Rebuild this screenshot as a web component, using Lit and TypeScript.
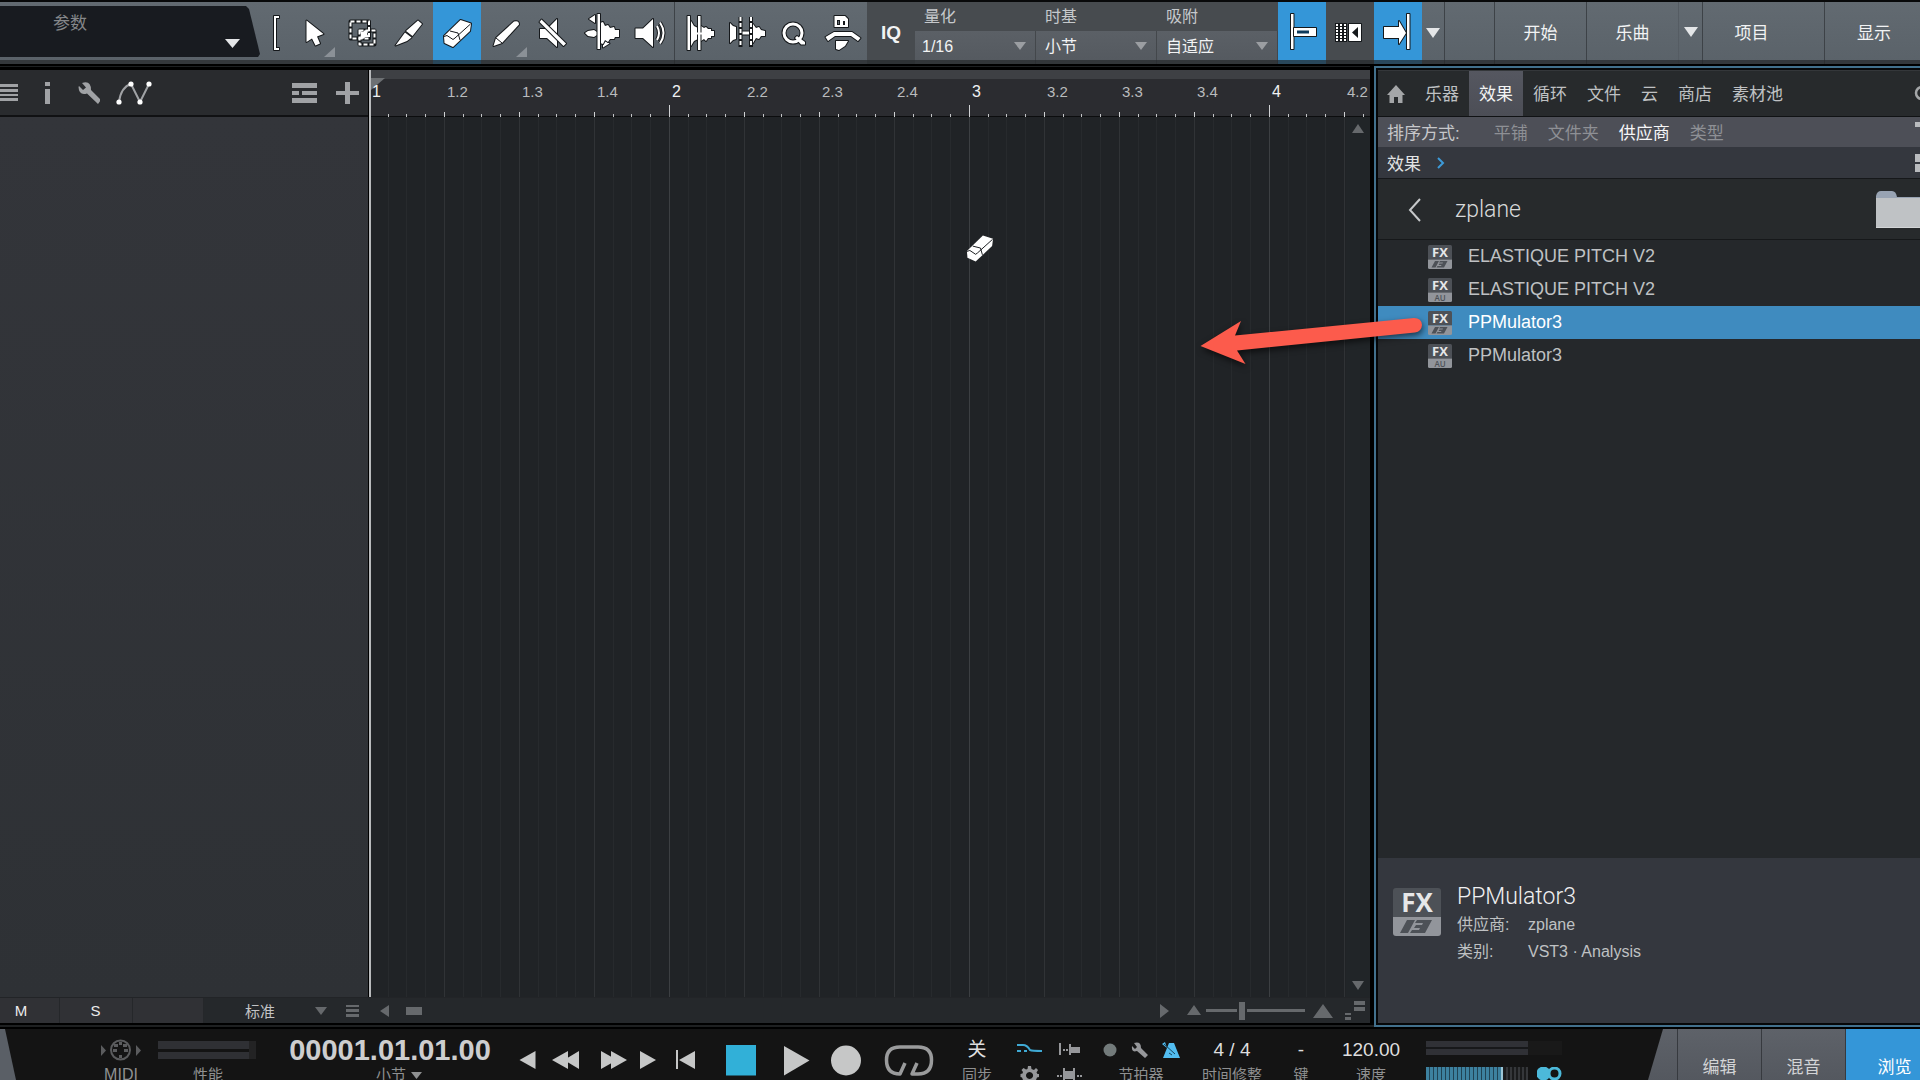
import { LitElement, html, svg, css } from "lit";
import { customElement, property, state } from "lit/decorators.js";
import { classMap } from "lit/directives/class-map.js";

const glyph = (x: number, y: number, w: number, h: number, body: unknown) =>
  html`<svg width=${w} height=${h} viewBox="${x} ${y} ${w} ${h}" aria-hidden="true">${body}</svg>`;

const shared = css`
  *, *::before, *::after { box-sizing: border-box; }
  svg { display: block; flex: none; }
  button, select, a {
    font: inherit; color: inherit; background: none; border: 0; padding: 0; margin: 0;
    border-radius: 0; text-decoration: none; cursor: pointer;
  }
  button, a { display: flex; align-items: center; justify-content: center; white-space: nowrap; }
`;

const eraser = svg`
  <path d="M444 36 460.500 20 471 23.500 470 31 453 47 444.500 43Z"/>
  <path class="line" d="M444 36.500 447 35.500 453 39.500 455 38 470.500 24M450 31 458 33 460 40"/>`;

const editTools = [
  { name: "箭头工具", x: 288, corner: 335, art: svg`<path d="M306.500 20.500V42L312 38.500 315.500 45.500 320 43.500 317 36.500 323.500 34Z"/>` },
  { name: "范围工具", x: 337, art: svg`
      <path class="under" d="M351.500 21.500H370V38.500H351.500Z"/><path class="under" d="M360.500 30.500H375.500V44.500H360.500Z"/>
      <path class="dash" d="M351.500 21.500H370V38.500H351.500Z"/><path class="dash" d="M360.500 30.500H375.500V44.500H360.500Z"/>
      <path class="core" d="M361 31 364 32 366 30 369 31.500 368 34 370 37 366.500 37 364 39 361 38 362 34.500Z"/>` },
  { name: "分割工具", x: 385, art: svg`<path d="M395.500 45.500 405 32.500 411.500 37.500 407 41Z"/><path d="M406 31 418 20.500 422 24 412.500 36Z"/>` },
  { name: "橡皮擦工具", x: 433, art: eraser },
  { name: "绘图工具", x: 481, corner: 527, art: svg`<path d="M493.500 46 496 38 514 21.500Q519 20 519 24.500L502 43Z"/><path class="line" d="M496 38 502 43"/>` },
  { name: "静音工具", x: 529, art: svg`<path d="M540 29H547L557 19V47L547 38H540Z"/><path d="M541.500 19.500 566 43.500 563.500 46 539.500 22Z"/>` },
  { name: "弯曲工具", x: 577, art: svg`
      <path d="M584 33 587 31 593 30 596 32V35L593 37 587 36Z"/><path d="M588 19 594 15V23Z"/><path d="M602 40V47.500L608.500 43.500Z"/>
      <path d="M599 23 602 22 604 26 607 25 609 28 613 27 614 30 618 30V37L614 37 613 39 609 39 607 42 604 40 602 44 599 43Z"/>
      <path d="M596.500 14H599V49H596.500Z"/>` },
  { name: "监听工具", x: 626, art: svg`
      <path d="M635.500 28.500H643L653 19V47L643 38H635.500Z"/>
      <path class="under" d="M657 26Q661 33 657 40M660 22.500Q667 33 660 43.500"/>
      <path class="arc" d="M657 26Q661 33 657 40M660 22.500Q667 33 660 43.500"/>` },
];

const macroTools = [
  { name: "剥离静音", x: 674, art: svg`
      <path d="M690 21 693 26 697 28V39L693 41 690 46Z"/>
      <path d="M700 26 703 28 705 27 707 29 710 29 710 31 713 31V36L710 36 710 38 707 38 705 41 703 39 700 41Z"/>
      <path d="M686.500 16H689V50H686.500Z"/><path d="M697 16H699.500V50H697Z"/><path class="core" d="M690 32.500H708V34.500H690Z"/>` },
  { name: "音频弯曲", x: 723, art: svg`
      <path d="M730 23 733 26 736 27V39L733 40 730 43Z"/>
      <path d="M753 24 756 28 759 27 761 30 765 31V36L761 36 759 39 756 38 753 43Z"/>
      <path d="M740 31.500H752V34.500H740Z"/>
      <path class="under" d="M740.500 17V47M751 17V47"/><path class="dash" d="M740.500 17V47M751 17V47"/>` },
  { name: "量化", x: 771, art: svg`<circle class="ring-under" cx="793" cy="33" r="9"/><path d="M795 38 797 36 805 42V44.500H801Z"/><circle class="arc bold" cx="793" cy="33" r="9"/>` },
  { name: "恢复计时", x: 820, art: svg`
      <path fill-rule="evenodd" d="M835.500 16H846L849 19V27H835.500ZM838 20V25H841V20ZM844 21V25H846V21Z"/>
      <path d="M826.500 37 835 32H853L861.500 38 859 41 852 36H836L829 41Z"/><path d="M837 41H849L846 46 840 50 837 49Z"/>` },
];

@customElement("daw-toolbar")
export class DawToolbar extends LitElement {
  @state() private active = "橡皮擦工具";

  static styles = [shared, css`
    :host { display: flex; box-sizing: border-box; height: 64px; border-top: 2px solid #08090a; position: relative; color: #f2f3f4;
      background: linear-gradient(#626a71, #5a6269); }
    :host::after { content: ""; position: absolute; inset: 58px 0 0; background: #26282b; opacity: .72; pointer-events: none; }
    svg path { fill: #fff; stroke: #15181b; stroke-width: 2px; paint-order: stroke; stroke-linejoin: round; }
    svg .core { stroke: none; }
    svg .line { fill: none; stroke-width: 1px; }
    svg .dash { fill: none; stroke: #fff; stroke-width: 2px; stroke-dasharray: 4 2; stroke-linejoin: miter; }
    svg .arc { fill: none; stroke: #fff; stroke-width: 2px; }
    svg .bold { stroke-width: 3px; }
    svg .under { fill: none; stroke: #15181b; stroke-width: 4px; }
    svg .ring-under { fill: none; stroke: #15181b; stroke-width: 5px; }
    svg .flat { fill: #8b9197; stroke: none; }
    svg .pale { fill: #e4e6e8; stroke: none; }
    .param { width: 260px; height: 51px; margin-top: 4px; display: flex; justify-content: space-between;
      background: #181b20; clip-path: polygon(0 0, 246px 0, 249px 3px, 260px 48px, 258px 100%, 0 100%); color: #85878a; font-size: 17px; }
    .param span { padding: 7px 0 0 53px; line-height: 22px; }
    .param svg { margin: 33px 19px 0 0; }
    .bracket { width: 28px; height: 58px; }
    .tools { display: grid; height: 62px; }
    .edit { width: 386px; grid-template-columns: repeat(8, 1fr); }
    .macro { width: 193px; grid-template-columns: repeat(4, 1fr); border-left: 1px solid #3d4247; }
    .tools button { align-items: flex-start; overflow: hidden; }
    .on { background: #3496d8; }
    .fields { display: flex; background: #474b4f; height: 62px; }
    .iq { width: 48px; height: 62px; font-size: 19px; font-weight: bold; }
    .field { width: 121px; display: flex; flex-direction: column; }
    .field label { height: 29px; padding-left: 9px; line-height: 30px; font-size: 16px; color: #c6c9cc; }
    .box { height: 33px; position: relative; background: linear-gradient(#5b6066, #54595f); border-right: 1px solid #43474b; }
    .box select { width: 100%; height: 31px; padding-left: 7px; appearance: none; font-size: 16px; outline: 0; }
    .field + .field select { padding-left: 9px; }
    .box svg { position: absolute; right: 9px; top: 11px; pointer-events: none; }
    .box path { fill: #9b9ea2; stroke: none; }
    .square { width: 48px; align-items: flex-start; }
    .square:nth-child(2) { background: #474b4f; }
    .snap { display: flex; height: 62px; }
    .snap .small { width: 23px; padding-bottom: 1px; border-right: 1px solid #3d4247; }
    .pages { flex: 1; min-width: 0; display: flex; height: 62px; font-size: 17px; overflow: hidden; }
    .pages > * { border-right: 1px solid #3d4247; flex: none; padding-bottom: 3px; }
    .blank { width: 50px; } .start { width: 92px; } .song { width: 92px; } .song-menu { width: 24px; }
    .pages .song { border-right-color: #555c63; }
    .project { width: 122px; padding-right: 24px; } .show { width: 98px; }
    .pages .show { border: 0; }
  `];

  private tool = (t: { name: string; x: number; corner?: number; art: unknown }) => html`
    <button class=${classMap({ on: t.name === this.active })} aria-label=${t.name} @click=${() => (this.active = t.name)}>
      ${glyph(t.x, 2, 48, 58, svg`${t.art}${t.corner ? svg`<path class="flat" d="M${t.corner} 47V57H${t.corner - 11}Z"/>` : ""}`)}
    </button>`;

  private field = (id: string, label: string, options: string[]) => html`
    <div class="field">
      <label for=${id}>${label}</label>
      <div class="box">
        <select id=${id}>${options.map((o) => html`<option>${o}</option>`)}</select>
        ${glyph(0, 0, 12, 8, svg`<path d="M0 0H12L6 8Z"/>`)}
      </div>
    </div>`;

  render() {
    return html`
      <div class="param"><span>参数</span>${glyph(0, 0, 16, 10, svg`<path class="pale" d="M0 0H15L7.500 9Z"/>`)}</div>
      <div class="bracket">${glyph(260, 2, 28, 58, svg`<path d="M274 16H279V18H276V48H279V50H274Z"/>`)}</div>
      <div class="tools edit">${editTools.map(this.tool)}</div>
      <div class="tools macro">${macroTools.map(this.tool)}</div>
      <div class="fields">
        <button class="iq">IQ</button>
        ${this.field("quantize", "量化", ["1/16"])}${this.field("timebase", "时基", ["小节"])}${this.field("snap", "吸附", ["自适应"])}
      </div>
      <div class="snap">
        <button class="square on" aria-label="吸附到网格">${glyph(1278, 2, 48, 58, svg`
          <path d="M1291 14H1293.500V49H1291Z"/><path d="M1294 28H1316V36H1294Z"/>
          <path style="fill:#0d3a5c;stroke:none" d="M1297 30.500H1309V33.500H1297Z"/>`)}</button>
        <button class="square" aria-label="自动滚动">${glyph(1326, 2, 48, 58, svg`
          <path style="fill:#15181b;stroke:none" d="M1335 23H1347V42H1335Z"/>
          <path style="stroke:#fff;stroke-width:2;stroke-dasharray:2 1;fill:none" d="M1337 24V41M1341 24V41M1345 24V41"/>
          <path d="M1349 24H1361V41H1349Z"/><path style="fill:#15181b;stroke:none" d="M1358 27V38L1352 32.500Z"/>`)}</button>
        <button class="square on" aria-label="跟随光标">${glyph(1374, 2, 48, 58, svg`
          <path d="M1384 27H1399V21L1406 33 1399 44V38H1384Z"/><path d="M1407 14H1409.500V49H1407Z"/>`)}</button>
        <button class="small" aria-label="滚动选项">${glyph(0, 0, 16, 10, svg`<path class="pale" d="M1 0H15L8 10Z"/>`)}</button>
      </div>
      <nav class="pages">
        <span class="blank"></span>
        <button class="start">开始</button>
        <button class="song">乐曲</button>
        <button class="song-menu" aria-label="乐曲菜单">${glyph(0, 0, 14, 10, svg`<path class="pale" d="M0 0H14L7 10Z"/>`)}</button>
        <button class="project">项目</button>
        <button class="show">显示</button>
      </nav>`;
  }
}

const beats = Array.from({ length: 14 }, (_, i) => {
  const bar = Math.floor(i / 4) + 1;
  const beat = (i % 4) + 1;
  return { major: beat === 1, text: beat === 1 ? `${bar}` : `${bar}.${beat}` };
});

@customElement("daw-arranger")
export class DawArranger extends LitElement {
  static styles = [shared, css`
    :host { display: grid; grid-template: 47px minmax(0, 1fr) 26px / 368px minmax(0, 1fr); min-width: 0; min-height: 0;
      padding-top: 6px; margin-bottom: 6px; background: linear-gradient(#000 2px, #1d2022 2px, #1d2022 3px, #000 3px); }
    .track-head { display: flex; align-items: center; background: #292b2e; border-bottom: 2px solid #101113; padding-right: 8px; gap: 16px; }
    .track-head .gap { flex: 1; }
    .track-head path { fill: #a0a2a5; }
    .track-head .wire { fill: none; stroke: #a0a2a5; stroke-width: 2px; }
    .track-head circle { fill: #fff; }
    .tracks { background: linear-gradient(#33353a, #2e3135); }
    .ruler { position: relative; border-left: 2px solid #b8babc; margin-left: 1px; overflow: hidden; display: flex;
      background: linear-gradient(#3e4044 9px, #2b2c30 9px); box-shadow: inset 0 -1px #0c0d0e; }
    .beat { flex: none; width: 75px; padding: 13px 0 0 1px; font-size: 15px; line-height: 18px; color: #b9bbbd;
      background:
        linear-gradient(#c4c6c8, #c4c6c8) 17px 100% / 1px 3px no-repeat,
        linear-gradient(#c4c6c8, #c4c6c8) 35px 100% / 1px 3px no-repeat,
        linear-gradient(#c4c6c8, #c4c6c8) 54px 100% / 1px 3px no-repeat,
        linear-gradient(#d0d2d4, #d0d2d4) 73px 100% / 1px 5px no-repeat; }
    .major { color: #f0f1f2; font-size: 16px; }
    .ruler .premajor { background:
        linear-gradient(#c4c6c8, #c4c6c8) 17px 100% / 1px 3px no-repeat,
        linear-gradient(#c4c6c8, #c4c6c8) 35px 100% / 1px 3px no-repeat,
        linear-gradient(#c4c6c8, #c4c6c8) 54px 100% / 1px 3px no-repeat,
        linear-gradient(#d0d2d4, #d0d2d4) 73px 100% / 1px 12px no-repeat; }
    .flag { position: absolute; left: 0; top: 8px; }
    .flag path { fill: #6d7073; }
    .beat span { position: relative; }
    .lane { display: flex; border-left: 2px solid #b8babc; margin-left: 1px; background: #23272a; min-height: 0; }
    .grid { flex: 1; background:
        repeating-linear-gradient(90deg, transparent 0 298px, #3c3f42 298px 299px, transparent 299px 300px),
        repeating-linear-gradient(90deg, transparent 0 73px, #303336 73px 74px, transparent 74px 75px),
        repeating-linear-gradient(90deg, transparent 0 17px, #272a2d 17px 18px, transparent 18px 35px, #272a2d 35px 36px, transparent 36px 54px, #272a2d 54px 55px, transparent 55px 75px),
        #202326; }
    .vscroll { width: 24px; display: flex; flex-direction: column; justify-content: space-between; align-items: center; padding: 7px 0; background: #212528; }
    .vscroll path, .foot path { fill: #66696c; }
    .foot { grid-column: 1 / -1; display: flex; align-items: center; background: #25282b; border-top: 1px solid #222427; color: #ececec; font-size: 15px; }
    .foot .key { height: 100%; background: #303135; border-right: 1px solid #25272a; }
    .m { width: 60px; padding-right: 17px; } .s { width: 73px; padding-right: 1px; } .e { width: 71px; }
    .mode { width: 133px; padding: 0 10px 0 41px; justify-content: space-between; color: #c2c3c5; height: 100%; }
    .foot .gap { flex: 1; }
    .list { margin-left: 9px; } .left { margin-left: 20px; } .thumb { margin: 0 0 0 16px; }
    .zoom { margin: 0 5px 0 17px; }
  `];

  render() {
    return html`
      <div class="track-head">
        ${glyph(0, 82, 22, 24, svg`<path d="M0 85H18V88H0ZM0 90H18V93H0ZM0 95H18V97H0ZM0 99H18V102H0Z"/>`)}
        ${glyph(38, 82, 18, 24, svg`<path d="M45 83H50V87H45ZM45 90H50V105H45Z"/>`)}
        ${glyph(72, 82, 28, 24, svg`<path d="M79 87 83 91 86 88.500 82 84Q91 81 91 91L101 101 98 105 87 94.500Q79 97 78.500 88Z"/>`)}
        ${glyph(116, 82, 40, 24, svg`<path class="wire" d="M119 103Q121 88 131 85M131 85 140 103 149 85"/>
          <circle cx="119" cy="103" r="2.600"/><circle cx="131" cy="85" r="2.600"/><circle cx="140" cy="103" r="2.600"/><circle cx="149" cy="85" r="2.600"/>`)}
        <span class="gap"></span>
        ${glyph(290, 82, 28, 24, svg`<path d="M292 84H317V89H292ZM292 92H299V96H292ZM302 92H317V96H302ZM292 99H317V104H292Z"/>`)}
        ${glyph(334, 82, 26, 24, svg`<path d="M345 83H350V92H359V96H350V105H345V96H336V92H345Z"/>`)}
      </div>
      <div class="ruler">
        <span class="flag">${glyph(0, 0, 14, 12, svg`<path d="M0 0H14L0 12Z"/>`)}</span>
        ${beats.map((b, i) => html`<div class=${classMap({ beat: true, major: b.major, premajor: i % 4 === 3 })}><span>${b.text}</span></div>`)}
      </div>
      <div class="tracks"></div>
      <div class="lane">
        <div class="grid"></div>
        <div class="vscroll">
          ${glyph(0, 0, 12, 9, svg`<path d="M6 0 12 9H0Z"/>`)}${glyph(0, 0, 12, 9, svg`<path d="M0 0H12L6 9Z"/>`)}
        </div>
      </div>
      <div class="foot">
        <button class="key m">M</button><button class="key s">S</button><span class="key e"></span>
        <button class="mode">标准 ${glyph(0, 0, 12, 8, svg`<path d="M0 0H12L6 8Z"/>`)}</button>
        <span class="list">${glyph(0, 0, 14, 14, svg`<path d="M0 1H13V3H0ZM0 5H13V8H0ZM0 10H13V13H0Z"/>`)}</span>
        <span class="left">${glyph(0, 0, 10, 14, svg`<path d="M9 1V13L0 7Z"/>`)}</span>
        <span class="thumb">${glyph(0, 0, 16, 8, svg`<path d="M0 0H16V8H0Z"/>`)}</span>
        <span class="gap"></span>
        ${glyph(1161, 1000, 10, 20, svg`<path d="M1161 1003V1017L1170 1010Z"/>`)}
        <span class="zoom">${glyph(1187, 1000, 178, 22, svg`
          <path d="M1187 1015H1201L1194 1005ZM1206 1009H1237V1012H1206ZM1239 1002H1245V1020H1239ZM1247 1009H1305V1012H1247ZM1313 1018H1333L1323 1004ZM1354 1001H1365V1005H1354ZM1354 1007H1365V1011H1354ZM1345 1013H1351V1015H1345ZM1345 1017H1351V1020H1345Z"/>`)}</span>
      </div>`;
  }
}

@customElement("fx-badge")
export class FxBadge extends LitElement {
  @property() format = "vst3";
  @property({ type: Number }) size = 24;

  static styles = css`
    :host { display: block; flex: none; }
    svg { display: block; }
    text { font-family: "Open Sans", "Liberation Sans", sans-serif; font-weight: bold; }
    .au { font-weight: 600; }
  `;

  render() {
    return html`<svg width=${this.size} height=${this.size} viewBox="0 0 48 48" role="img" aria-label="FX">
      <path fill="#4d5157" d="M3 0H45Q48 0 48 3V29H0V3Q0 0 3 0Z"/>
      <path fill="#92959b" d="M0 29H48V45Q48 48 45 48H3Q0 48 0 45Z"/>
      <text x="24" y="24" font-size="26" text-anchor="middle" fill="#e6e7e8">FX</text>
      ${this.format === "au"
        ? svg`<text class="au" x="24" y="45" font-size="16" text-anchor="middle" fill="#4d5157">AU</text>`
        : svg`<path fill="#4d5157" d="M14 32H22L15 45H7ZM24 32H39L32 45H17L19 42H26L27 40H21L23 37H29L30 35H22Z"/>`}
    </svg>`;
  }
}

const plugins = [
  { name: "ELASTIQUE PITCH V2", format: "vst3" },
  { name: "ELASTIQUE PITCH V2", format: "au" },
  { name: "PPMulator3", format: "vst3" },
  { name: "PPMulator3", format: "au" },
];

@customElement("daw-browser")
export class DawBrowser extends LitElement {
  @state() private selected = 2;

  static styles = [shared, css`
    :host { display: flex; flex-direction: column; margin: 2px 0; border: 2px solid #42708c; border-right: 0; min-height: 0; overflow: hidden;
      padding: 2px 0 2px 2px; background: #060708; color: #bfc1c3; font-size: 17px; }
    .tabs { display: flex; height: 46px; background: #272a2c; padding-left: 9px; border-top: 1px solid #34373a; }
    .tabs button { padding: 0 10px 2px; height: 45px; }
    .tabs .home { padding: 0 10px 0 0; }
    .tabs .on { background: linear-gradient(#555760, #4c4e56); color: #f3f4f4; }
    .tabs .search { margin-left: auto; padding: 0; width: 6px; justify-content: flex-start; overflow: hidden; }
    .sort { display: flex; align-items: center; height: 31px; background: #4d4f57; border-top: 1px solid #101214; padding: 0 0 2px 9px; gap: 20px; color: #8e9095; }
    .sort span { color: #c6c7ca; padding-right: 14px; }
    .sort .on { color: #f6f6f7; }
    .crumb { display: flex; align-items: center; gap: 16px; height: 32px; padding-left: 9px; background: #34373e; color: #e3e4e5; border-bottom: 1px solid #16181a; }
    .edge { margin-left: auto; width: 5px; overflow: hidden; }
    .edge path { fill: #b9bbbe; }
    .vendor { display: flex; align-items: center; height: 61px; background: #272a2c; border-bottom: 1px solid #16181a; padding: 1px 0 0 30px; }
    .vendor h2 { font: 300 23px/30px Roboto, "Liberation Sans", sans-serif; margin: 0 0 0 34px; color: #d9dadb; }
    .folder { margin-left: auto; width: 44px; overflow: hidden; }
    .list { flex: 1; background: #25282b; font-size: 18px; min-height: 0; }
    .list button { width: 100%; height: 33px; padding-left: 50px; gap: 16px; justify-content: flex-start; text-align: left; }
    .list .on { background: #3f8bbf; color: #fff; }
    .info { height: 165px; background: #34373e; display: flex; padding: 25px 15px; gap: 16px; }
    .info fx-badge { margin-top: 5px; }
    .info h3 { font: 300 23px/28px Roboto, "Liberation Sans", sans-serif; margin: 0; color: #f0f0f1; }
    .info dl { display: grid; grid-template-columns: 71px 1fr; margin: 0; font-size: 16px; line-height: 27px; white-space: nowrap; }
    .info dd { margin: 0; }
  `];

  render() {
    const current = plugins[this.selected];
    return html`
      <nav class="tabs">
        <button class="home" aria-label="主页">${glyph(1387, 83, 18, 19, svg`<path fill="#a4a6a8" d="M1396 84 1405 94H1402.500V102H1398V96H1394V102H1389.500V94H1387Z"/>`)}</button>
        <button>乐器</button><button class="on">效果</button><button>循环</button><button>文件</button>
        <button>云</button><button>商店</button><button>素材池</button>
        <button class="search" aria-label="搜索">${glyph(0, 0, 16, 16, svg`<circle cx="8" cy="7" r="6" fill="none" stroke="#a4a6a8" stroke-width="2.500"/>`)}</button>
      </nav>
      <div class="sort"><span>排序方式:</span><button>平铺</button><button>文件夹</button><button class="on">供应商</button><button>类型</button>
        <i class="edge">${glyph(0, 0, 12, 18, svg`<path d="M0 0H12V5H0Z"/>`)}</i></div>
      <div class="crumb"><a href="#effects">效果</a>
        ${glyph(0, 0, 8, 14, svg`<path fill="none" stroke="#3d9ad8" stroke-width="2" d="M1 2 6 7 1 12"/>`)}
        <i class="edge">${glyph(0, 0, 12, 18, svg`<path d="M0 0H12V8H0ZM0 10H12V18H0Z"/>`)}</i></div>
      <div class="vendor">
        <button aria-label="返回">${glyph(0, 0, 13, 24, svg`<path fill="none" stroke="#c6c8ca" stroke-width="2" d="M12 1 2 12 12 23"/>`)}</button>
        <h2>zplane</h2>
        <span class="folder">${glyph(0, 0, 56, 38, svg`
          <path fill="#98a3b3" d="M0 8V5Q1 0 5 0H16Q20 0 21 6H56V12H0Z"/><path fill="#bfc2c5" d="M0 7H56V37H0Z"/><path fill="#d3d5d7" d="M0 36H56V37H0Z"/>`)}</span>
      </div>
      <div class="list">
        ${plugins.map((p, i) => html`<button class=${classMap({ on: i === this.selected })} @click=${() => (this.selected = i)}>
          <fx-badge format=${p.format}></fx-badge>${p.name}</button>`)}
      </div>
      <section class="info">
        <fx-badge size="48" format=${current.format}></fx-badge>
        <div>
          <h3>${current.name}</h3>
          <dl><dt>供应商:</dt><dd>zplane</dd><dt>类别:</dt><dd>VST3 · Analysis</dd></dl>
        </div>
      </section>`;
  }
}

const playback = [
  { name: "后退", x: 508, w: 38, art: svg`<path d="M535.500 1051V1069L519.500 1060Z"/>` },
  { name: "快退", x: 546, w: 44, art: svg`<path d="M568 1051V1069L552 1060ZM579 1051V1069L564 1060Z"/>` },
  { name: "快进", x: 590, w: 44, art: svg`<path d="M601 1051V1069L617 1060ZM611 1051V1069L627 1060Z"/>` },
  { name: "前进", x: 634, w: 30, art: svg`<path d="M640 1051V1069L656 1060Z"/>` },
  { name: "回到开头", x: 664, w: 46, art: svg`<path d="M676 1050H678V1069H676ZM695 1051V1069L679 1060Z"/>` },
  { name: "停止", x: 710, w: 62, art: svg`<path style="fill:#31b0d8" d="M726 1045H756V1075.500H726Z"/>` },
  { name: "播放", x: 772, w: 50, art: svg`<path d="M784 1046V1075.500L809.500 1060.500Z"/>` },
  { name: "录音", x: 822, w: 50, art: svg`<circle cx="846" cy="1060.500" r="15"/>` },
  { name: "循环", x: 872, w: 72, art: svg`<path style="fill:none;stroke:#9a9b9c;stroke-width:3.500;stroke-linejoin:round" d="M905 1063 900 1074Q886.500 1074 886.500 1060 886.500 1047 900 1047H918Q931.500 1047 931.500 1060 931.500 1074 918 1074H912L917 1063"/>` },
];

@customElement("daw-transport")
export class DawTransport extends LitElement {
  static styles = [shared, css`
    :host { display: flex; height: 51px; overflow: hidden; background: #141414; color: #dededf; font-size: 19px; }
    svg path, svg circle { fill: #c6c7c7; }
    .slant-left { width: 16px; flex: none; background: #5a5f66; clip-path: polygon(0 0, 5px 0, 100% 100%, 0 100%); }
    .cell { flex: none; text-align: center; white-space: nowrap; }
    .value { height: 36px; padding-top: 5px; line-height: 32px; display: flex; justify-content: center; align-items: center; gap: 14px; }
    .label { font-size: 15px; line-height: 20px; color: #8f9091; display: flex; justify-content: center; align-items: center; gap: 5px; }
    .midi { width: 74px; margin-left: 68px; }
    .midi .label { font-size: 16px; }
    .midi path, .midi circle { fill: #5b5c5e; }
    .midi .ring { fill: none; stroke: #5b5c5e; stroke-width: 2px; }
    .load { width: 98px; }
    .load .label { padding-left: 2px; }
    .bars { width: 98px; height: 18px; background: linear-gradient(#2f3034 8px, #141414 8px 11px, #2f3034 11px); border-right: 7px solid #232324; }
    .time { width: 206px; margin-left: 31px; font-size: 29px; font-weight: bold; color: #cdcecf; }
    .time .value { padding-top: 6px; }
    .time .label { font-weight: normal; padding-left: 18px; }
    .play { display: flex; margin-left: 15px; flex: none; }
    .play button { flex: none; }
    .sync { width: 66px; margin-right: 2px; }
    .icons { width: 36px; } .icons.wide { width: 44px; }
    .icons svg path, .metro svg path { fill: #96979a; }
    .icons .value .blue { fill: none; stroke: #3fa9d4; stroke-width: 2px; }
    .metro { width: 98px; }
    .metro svg .cyan { fill: #52bdf0; }
    .metro svg .cut { fill: none; stroke: #17465e; stroke-width: 1px; }
    .sig { width: 84px; margin-right: 2px; } .keysig { width: 50px; } .tempo { width: 90px; }
    .meter { width: 136px; margin-left: 10px; padding-top: 12px; flex: none; display: grid; grid-template: 14px 30px / 102px 34px; row-gap: 12px; }
    .lanes { background: linear-gradient(#303136 6px, #17181a 6px 8px, #303136 8px); }
    .lanes-end { background: #191919; }
    .volume { background: linear-gradient(90deg, transparent 75px, #9cc6d6 75px 77px, #1c1d1e 77px),
      repeating-linear-gradient(90deg, #3d819f 0 3px, #204354 3px 4px); }
    .volume i { display: block; height: 100%; margin-left: 78px; background: repeating-linear-gradient(90deg, #1a1b1c 0 2px, #35373a 2px 4px); }
    .stereo { padding-left: 9px; }
    .stereo .full { fill: #4cb9da; } .stereo .ring { fill: #141414; stroke: #4cb9da; stroke-width: 3px; }
    .views { display: flex; margin-left: auto; width: 272px; flex: none; background: linear-gradient(#5e6269, #54585f); padding-left: 29px;
      clip-path: polygon(15px 0, 100% 0, 100% 100%, 0 100%); font-size: 17px; color: #d3d4d6; }
    .views button { width: 84px; flex: none; border-left: 1px solid #373a3f; padding-top: 21px; }
    .views .on { background: #3496d8; width: 98px; color: #fff; }
  `];

  private cell = (cls: string, value: unknown, label: unknown) => html`
    <div class="cell ${cls}"><div class="value">${value}</div><div class="label">${label}</div></div>`;

  render() {
    return html`
      <div class="slant-left"></div>
      ${this.cell("midi", glyph(101, 1038, 42, 24, svg`
        <path d="M102 1045V1056L107 1050.500ZM137 1045V1056L142 1050.500Z"/><circle class="ring" cx="121.500" cy="1050" r="9.500"/>
        <path d="M114 1049H118V1052H114ZM125 1049H129V1052H125ZM115 1044H119V1047H115ZM124 1044H128V1047H124ZM120 1042H123V1045H120ZM120 1055H123V1058H120Z"/>`), "MIDI")}
      ${this.cell("load", html`<div class="bars"></div>`, "性能")}
      ${this.cell("time", "00001.01.01.00", html`小节 ${glyph(0, 0, 11, 7, svg`<path style="fill:#8f9091" d="M0 0H11L5.500 7Z"/>`)}`)}
      <div class="play">${playback.map((p) => html`<button aria-label=${p.name}>${glyph(p.x, 1029, p.w, 51, p.art)}</button>`)}</div>
      ${this.cell("sync", "关", "同步")}
      ${this.cell("icons", glyph(1017, 1040, 28, 20, svg`<path class="blue" d="M1018 1045H1024Q1028 1045 1031 1050 1033 1051 1043 1051M1018 1051H1022M1025 1051H1028"/>`),
        glyph(1020, 1064, 20, 20, svg`<path fill-rule="evenodd" d="M1028 1065H1031L1031.500 1068 1034 1069 1036 1067 1038 1069 1036.500 1071.500 1037.500 1073H1039V1076L1037 1076.500 1036 1079 1038 1081H1021L1023 1079 1022 1076.500 1020.500 1076V1073L1022.500 1072.500 1023 1071 1021.500 1069 1023.500 1067 1026 1068.500 1027.500 1068ZM1029.500 1071A3.500 3.500 0 1 0 1029.600 1071Z"/>`))}
      ${this.cell("icons wide", glyph(1058, 1040, 24, 18, svg`<path d="M1059 1042H1061V1054H1059ZM1063 1048H1065V1050H1063ZM1066 1048H1068V1050H1066ZM1069 1043H1071V1046H1080V1052H1071V1054H1069Z"/>`),
        glyph(1056, 1064, 26, 20, svg`<path d="M1056 1074H1058V1076H1056ZM1059 1074H1061V1076H1059ZM1062 1067H1064V1070H1072V1067H1074V1080H1072V1078H1064V1080H1062ZM1076 1074H1078V1076H1076ZM1079 1074H1081V1076H1079Z"/>`))}
      ${this.cell("metro", html`
        ${glyph(1104, 1042, 14, 14, svg`<circle cx="1111" cy="1049" r="6.500" style="fill:#737b7b"/>`)}
        ${glyph(1132, 1041, 17, 18, svg`<path d="M1133 1046 1136 1049 1138 1047 1135 1043Q1142 1041 1142 1048L1149 1055 1146 1058 1138 1051Q1132 1053 1133 1046Z"/>`)}
        ${glyph(1163, 1041, 18, 18, svg`<path class="cyan" d="M1170 1043H1175L1181 1058H1164ZM1163 1044 1166 1042 1168 1048Z"/><path class="cut" d="M1165 1044 1176 1054M1170 1053 1173 1055"/>`)}`, "节拍器")}
      ${this.cell("sig", "4 / 4", "时间修整")}
      ${this.cell("keysig", "-", "键")}
      ${this.cell("tempo", "120.00", "速度")}
      <div class="meter">
        <div class="lanes"></div><div class="lanes-end"></div>
        <div class="volume"><i></i></div>
        <div class="stereo">${glyph(1537, 1067, 25, 14, svg`<circle class="full" cx="1543.500" cy="1073.500" r="7"/><circle class="ring" cx="1554.500" cy="1073.500" r="5.500"/>`)}</div>
      </div>
      <nav class="views"><button>编辑</button><button>混音</button><button class="on">浏览</button></nav>`;
  }
}

@customElement("app-root")
export class AppRoot extends LitElement {
  static styles = css`
    :host { display: flex; flex-direction: column; height: 100vh; overflow: hidden; position: relative; background: #000;
      font-family: "Liberation Sans", "Noto Sans CJK SC", sans-serif; }
    .work { flex: 1; min-height: 0; display: grid; grid-template: minmax(0, 1fr) / minmax(0, 1fr) 546px; column-gap: 4px;
      background: linear-gradient(0deg, #000 2px, #1e2021 2px 4px, #000 4px); }
    svg { position: absolute; pointer-events: none; }
    .pointer { left: 965px; top: 233px; }
    .arrow { right: 490px; top: 312px; }
    .arrow path { fill: #fc5b4c; filter: drop-shadow(1px 3px 3px rgba(0, 0, 0, .6)); }
    .pointer path { fill: #fff; }
    .pointer .line { fill: none; stroke: #15181b; }
  `;

  render() {
    return html`
      <daw-toolbar></daw-toolbar>
      <main class="work"><daw-arranger></daw-arranger><daw-browser></daw-browser></main>
      <daw-transport></daw-transport>
      <svg class="pointer" width="30" height="32" viewBox="442 18 31 32" aria-hidden="true">${eraser}</svg>
      <svg class="arrow" width="234" height="64" viewBox="1196 312 234 64" aria-hidden="true">
        <path d="M1200.500 346 1241 321 1235 335.500 1414 318Q1421.500 318 1422 325 1421.500 331.500 1415 332.500L1237 350.500 1245.500 364Z"/>
      </svg>`;
  }
}
